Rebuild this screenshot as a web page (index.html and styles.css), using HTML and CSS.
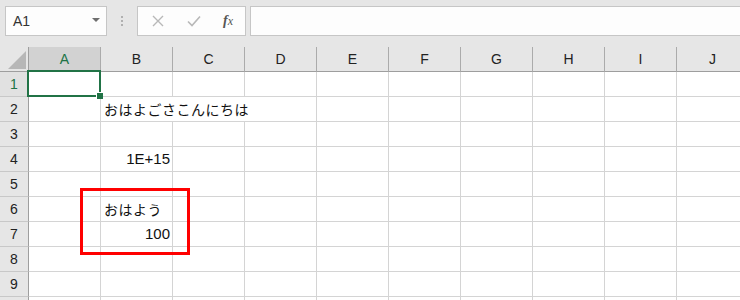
FILE: index.html
```html
<!DOCTYPE html>
<html lang="ja">
<head>
<meta charset="UTF-8">
<title>Book1 - Excel</title>
<link rel="stylesheet" href="styles.css">
</head>
<body>

<div class="toolbar">
  <div class="namebox">
    <span>A1</span>
    <svg class="drop" width="8" height="4" viewBox="0 0 8 4"><path d="M0 0h8L4 4z" fill="#6e6e6e"/></svg>
  </div>
  <div class="grip"><i></i><i></i><i></i></div>
  <div class="fbuttons">
    <svg width="12" height="12" viewBox="0 0 12 12"><path d="M1 1l10 10M11 1L1 11" stroke="#b8b8b8" stroke-width="1.4" fill="none"/></svg>
    <svg width="14" height="12" viewBox="0 0 14 12"><path d="M1 6.5l4 4L13 1.5" stroke="#b8b8b8" stroke-width="1.6" fill="none"/></svg>
    <span class="fx"><b>f</b>x</span>
  </div>
  <div class="formula"></div>
</div>

<div class="sheet">
  <div class="corner"><svg width="18" height="18" viewBox="0 0 18 18"><path d="M18 0V18H0z" fill="#b7b7b7"/></svg></div>
  <div class="colhead active">A</div>
  <div class="colhead">B</div>
  <div class="colhead">C</div>
  <div class="colhead">D</div>
  <div class="colhead">E</div>
  <div class="colhead">F</div>
  <div class="colhead">G</div>
  <div class="colhead">H</div>
  <div class="colhead">I</div>
  <div class="colhead">J</div>

  <div class="rowhead active">1</div>
  <div class="cell selected"><span class="handle"></span></div>
  <div class="cell"></div><div class="cell"></div><div class="cell"></div><div class="cell"></div><div class="cell"></div><div class="cell"></div><div class="cell"></div><div class="cell"></div><div class="cell"></div>

  <div class="rowhead">2</div>
  <div class="cell"></div>
  <div class="cell wide">おはよごさこんにちは</div>
  <div class="cell"></div><div class="cell"></div><div class="cell"></div><div class="cell"></div><div class="cell"></div><div class="cell"></div>

  <div class="rowhead">3</div>
  <div class="cell"></div><div class="cell"></div><div class="cell"></div><div class="cell"></div><div class="cell"></div><div class="cell"></div><div class="cell"></div><div class="cell"></div><div class="cell"></div><div class="cell"></div>

  <div class="rowhead">4</div>
  <div class="cell"></div>
  <div class="cell num">1E+15</div>
  <div class="cell"></div><div class="cell"></div><div class="cell"></div><div class="cell"></div><div class="cell"></div><div class="cell"></div><div class="cell"></div><div class="cell"></div>

  <div class="rowhead">5</div>
  <div class="cell"></div><div class="cell"></div><div class="cell"></div><div class="cell"></div><div class="cell"></div><div class="cell"></div><div class="cell"></div><div class="cell"></div><div class="cell"></div><div class="cell"></div>

  <div class="rowhead">6</div>
  <div class="cell"></div>
  <div class="cell">おはよう</div>
  <div class="cell"></div><div class="cell"></div><div class="cell"></div><div class="cell"></div><div class="cell"></div><div class="cell"></div><div class="cell"></div><div class="cell"></div>

  <div class="rowhead">7</div>
  <div class="cell"></div>
  <div class="cell num">100</div>
  <div class="cell"></div><div class="cell"></div><div class="cell"></div><div class="cell"></div><div class="cell"></div><div class="cell"></div><div class="cell"></div><div class="cell"></div>

  <div class="rowhead">8</div>
  <div class="cell"></div><div class="cell"></div><div class="cell"></div><div class="cell"></div><div class="cell"></div><div class="cell"></div><div class="cell"></div><div class="cell"></div><div class="cell"></div><div class="cell"></div>

  <div class="rowhead">9</div>
  <div class="cell"></div><div class="cell"></div><div class="cell"></div><div class="cell"></div><div class="cell"></div><div class="cell"></div><div class="cell"></div><div class="cell"></div><div class="cell"></div><div class="cell"></div>

  <div class="rowhead"></div>
  <div class="cell"></div><div class="cell"></div><div class="cell"></div><div class="cell"></div><div class="cell"></div><div class="cell"></div><div class="cell"></div><div class="cell"></div><div class="cell"></div><div class="cell"></div>

  <!-- 赤枠 -->
  <div class="mark"></div>
</div>

</body>
</html>
```

FILE: styles.css
```css
body {
  margin: 0;
  width: 740px;
  height: 300px;
  overflow: hidden;
  background: #e6e6e6;
  font-family: "Liberation Sans", "Noto Sans CJK JP", sans-serif;
  color: #222;
}
.toolbar {
  display: flex;
  align-items: flex-start;
  height: 47px;
  padding: 6px 0 0 5px;
  box-sizing: border-box;
}
.namebox {
  width: 102px;
  height: 30px;
  box-sizing: border-box;
  background: #fdfdfd;
  border: 1px solid #c6c6c6;
  display: flex;
  align-items: center;
  justify-content: space-between;
  padding: 0 6px 0 7px;
  font-size: 14px;
  color: #333;
}
.drop {
  margin-top: -3px;
}
.grip {
  width: 30px;
  height: 30px;
  display: flex;
  flex-direction: column;
  align-items: center;
  justify-content: center;
  gap: 2px;
}
.grip i {
  width: 2px;
  height: 2px;
  background: #b0b0b0;
}
.fbuttons {
  width: 109px;
  height: 30px;
  box-sizing: border-box;
  background: #fdfdfd;
  border: 1px solid #c6c6c6;
  display: flex;
  align-items: center;
  justify-content: space-between;
  padding: 0 12px 0 14px;
}
.fx {
  font-family: "Liberation Serif", serif;
  font-style: italic;
  font-size: 12px;
  color: #555;
}
.fx b {
  font-size: 14px;
  font-weight: bold;
}
.formula {
  flex: 1;
  height: 30px;
  margin-left: 4px;
  margin-right: -10px;
  box-sizing: border-box;
  background: #fdfdfd;
  border: 1px solid #c6c6c6;
}

.sheet {
  position: relative;
  display: grid;
  grid-template-columns: 29px repeat(10, 72px);
  grid-template-rows: 25px;
  grid-auto-rows: 25px;
  background: #fff;
}
.corner {
  background: #e6e6e6;
  border-right: 1px solid #9e9e9e;
  border-bottom: 1px solid #9e9e9e;
  display: flex;
  align-items: flex-end;
  justify-content: flex-end;
  padding: 0 2px 2px 0;
  box-sizing: border-box;
}
.colhead {
  background: #e6e6e6;
  border-right: 1px solid #ababab;
  border-bottom: 1px solid #9e9e9e;
  box-sizing: border-box;
  text-align: center;
  line-height: 24px;
  font-size: 14px;
  color: #222;
}
.rowhead {
  background: #e6e6e6;
  border-right: 1px solid #9e9e9e;
  border-bottom: 1px solid #c8c8c8;
  box-sizing: border-box;
  text-align: center;
  line-height: 24px;
  font-size: 14px;
  color: #222;
}
.colhead.active,
.rowhead.active {
  background: #d2d2d2;
  color: #217346;
}
.rowhead.active {
  background: #e1e1e1;
}
.cell {
  border-right: 1px solid #d4d4d4;
  border-bottom: 1px solid #d4d4d4;
  box-sizing: border-box;
  line-height: 24px;
  font-size: 14px;
  padding: 0 2px 0 3px;
  white-space: nowrap;
  letter-spacing: 0.5px;
  color: #111;
  font-family: "Noto Sans CJK JP", sans-serif;
}
.cell.wide {
  grid-column: span 3;
  letter-spacing: 0.5px;
}
.cell.num {
  text-align: right;
  letter-spacing: 0;
  font-family: "Liberation Sans", sans-serif;
  font-size: 15px;
}
.cell.selected {
  position: relative;
}
.cell.selected::before {
  content: "";
  position: absolute;
  left: -2px;
  top: -2px;
  right: -1px;
  bottom: -1px;
  border: 2px solid #217346;
}
.handle {
  position: absolute;
  right: -3px;
  bottom: -3px;
  width: 6px;
  height: 6px;
  background: #217346;
  border-left: 1px solid #fff;
  border-top: 1px solid #fff;
  z-index: 1;
}
.mark {
  position: absolute;
  left: 80px;
  top: 141px;
  width: 110px;
  height: 67px;
  box-sizing: border-box;
  border: 3.5px solid #ff0000;
}
```
